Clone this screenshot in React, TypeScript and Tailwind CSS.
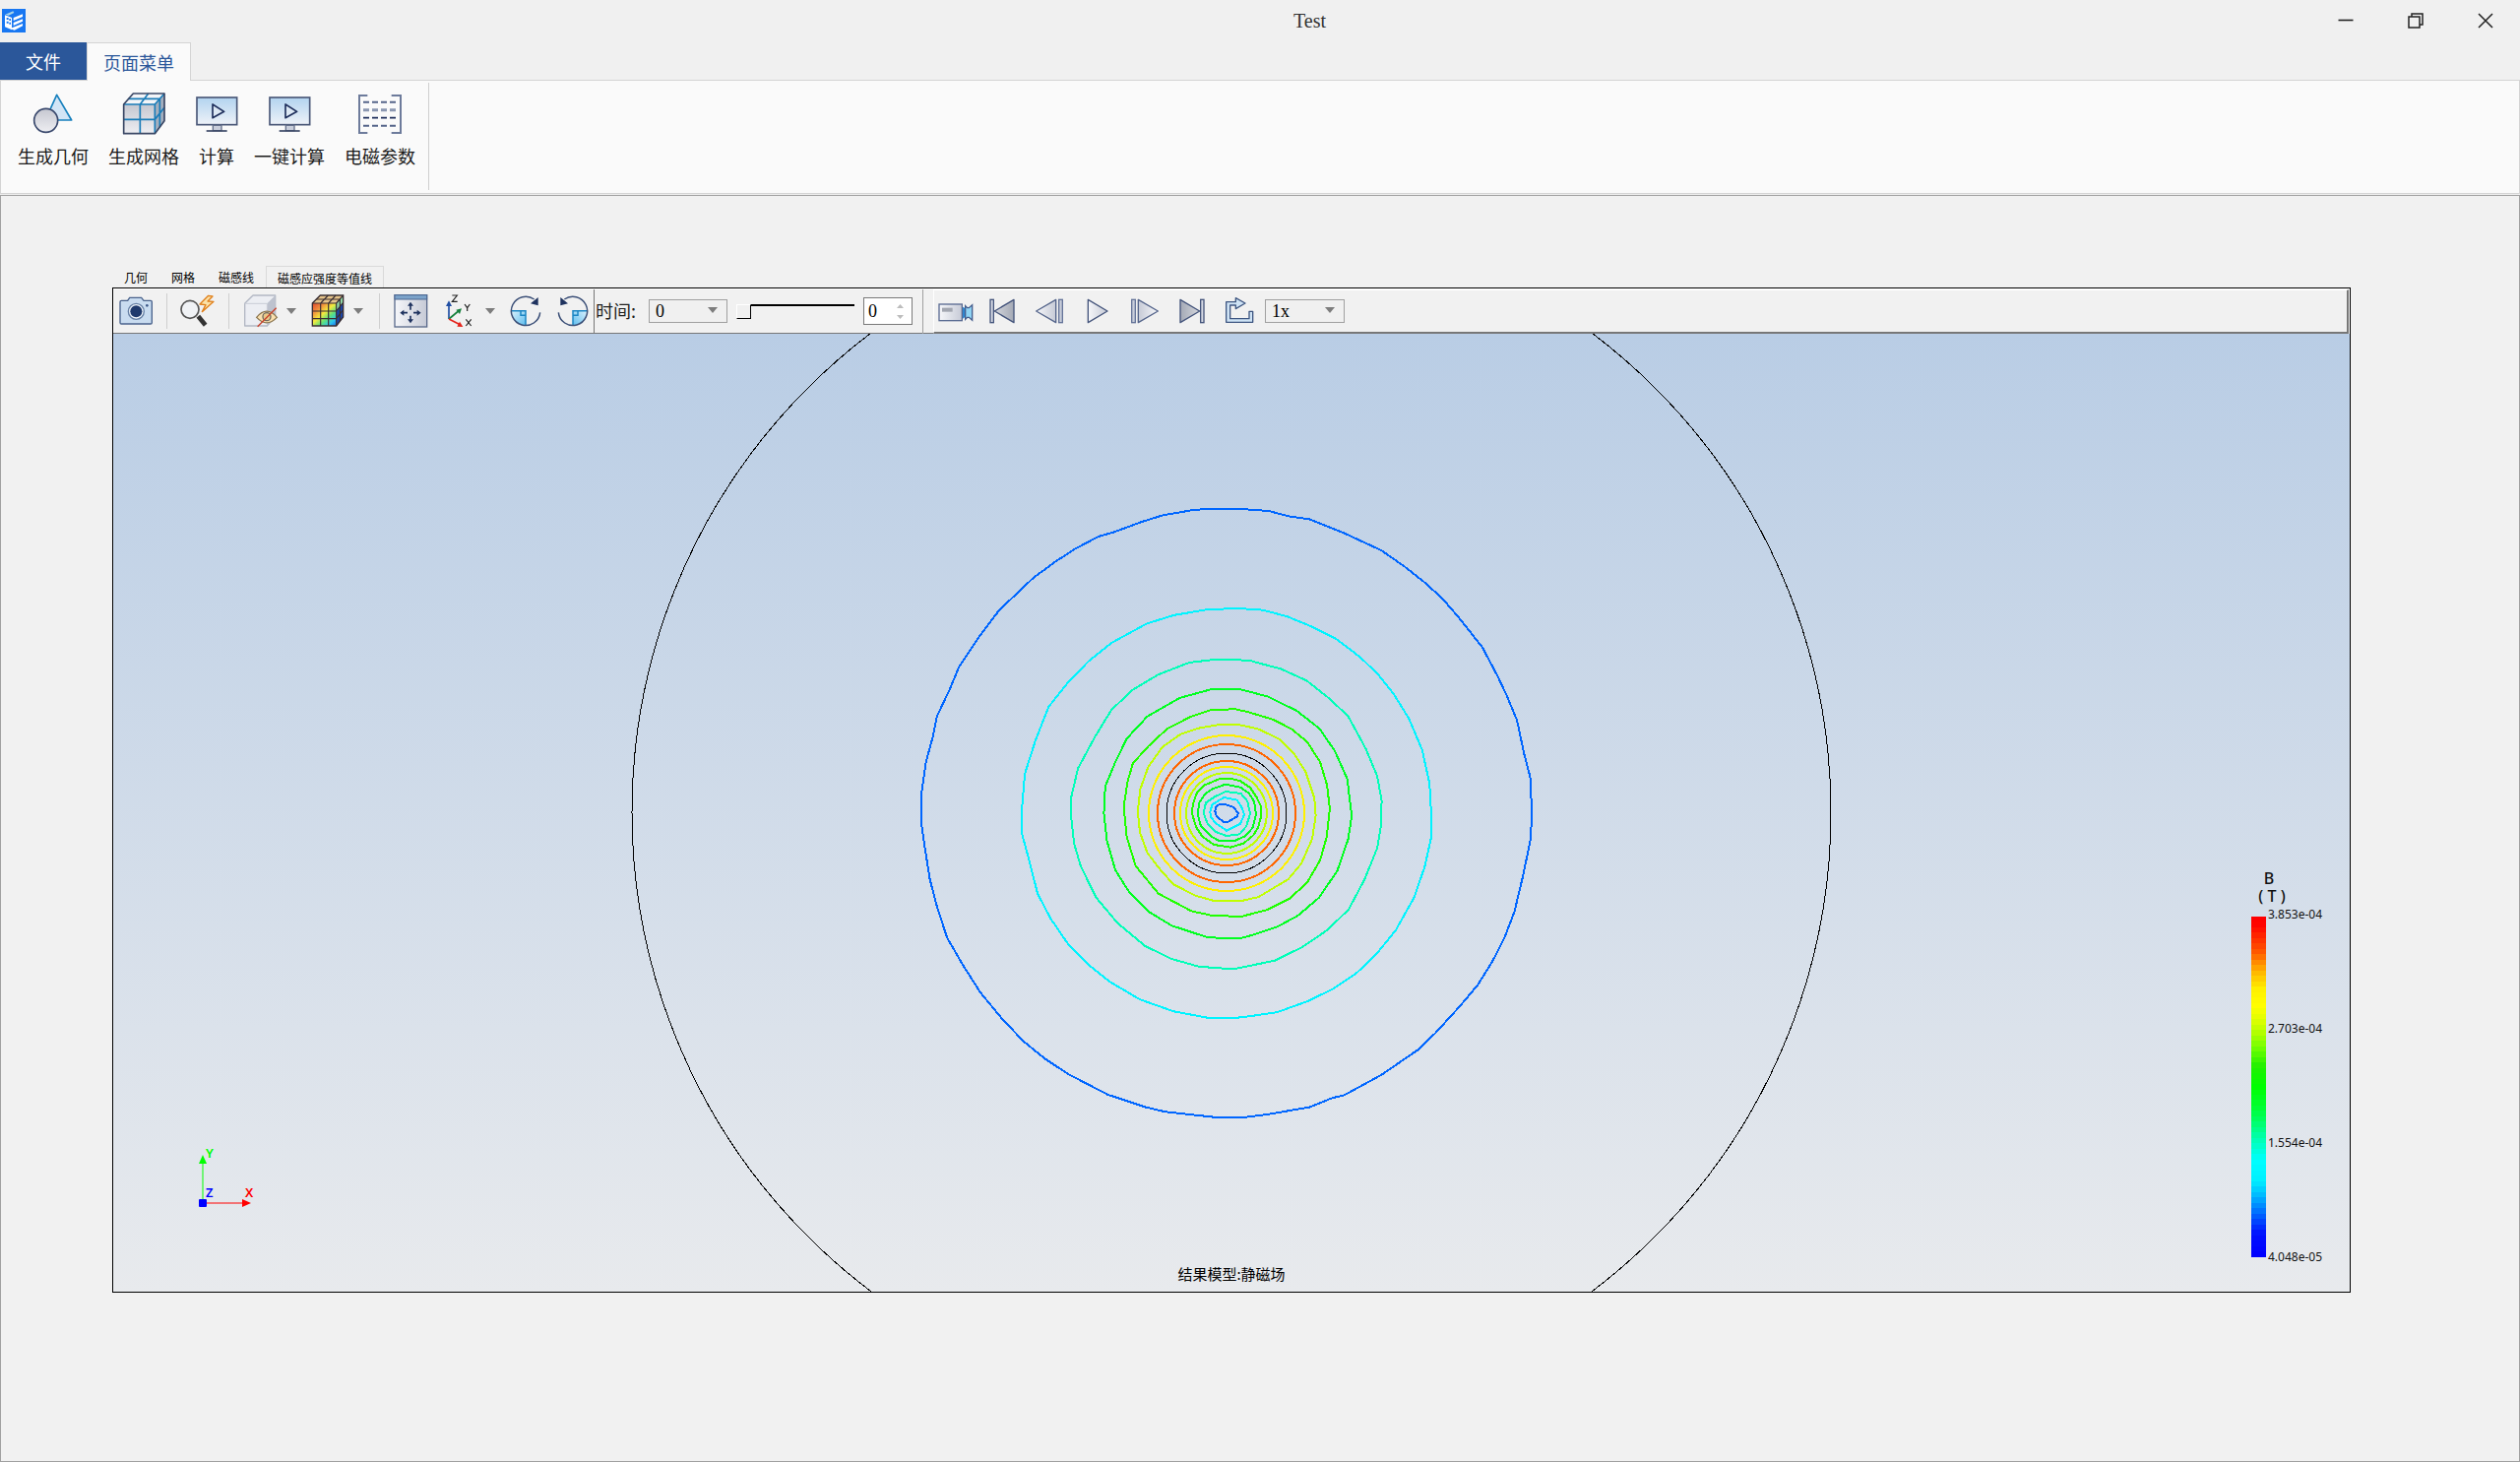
import React from "react";

const CJK = "font-['Noto_Sans_CJK_SC',sans-serif]";
const NUMERIC = "font-['Liberation_Serif','Noto_Sans_CJK_SC',serif]";

/* ---------- icons ---------- */

function Defs() {
  return (
    <svg className="absolute h-0 w-0" aria-hidden="true">
      <defs>
        <linearGradient id="blueScreen" x1="0" y1="0" x2="0" y2="1">
          <stop offset="0" stopColor="#b2d3ef" />
          <stop offset="1" stopColor="#eef2f8" />
        </linearGradient>
        <linearGradient id="greyDown" x1="0" y1="0" x2="0" y2="1">
          <stop offset="0" stopColor="#c5c7d0" />
          <stop offset="1" stopColor="#eeeef2" />
        </linearGradient>
        <linearGradient id="greyRight" x1="0" y1="0" x2="1" y2="0">
          <stop offset="0" stopColor="#f6f7fa" />
          <stop offset="1" stopColor="#c6cad6" />
        </linearGradient>
        <linearGradient id="greyDark" x1="0" y1="0" x2="1" y2="0">
          <stop offset="0" stopColor="#d5d7dd" />
          <stop offset="1" stopColor="#a4a9b5" />
        </linearGradient>
        <linearGradient id="skyFill" x1="0" y1="0" x2="1" y2="1">
          <stop offset="0" stopColor="#d9f0fc" />
          <stop offset="1" stopColor="#5dbdee" />
        </linearGradient>
        <linearGradient id="rainbow" x1="0.1" y1="0.1" x2="0.9" y2="1">
          <stop offset="0" stopColor="#d93a2b" />
          <stop offset="0.25" stopColor="#f08a3c" />
          <stop offset="0.45" stopColor="#f3ea3e" />
          <stop offset="0.62" stopColor="#5fe07c" />
          <stop offset="0.78" stopColor="#2bc4f0" />
          <stop offset="1" stopColor="#1540e0" />
        </linearGradient>
      </defs>
    </svg>
  );
}

function AppLogo() {
  return (
    <svg viewBox="0 0 72 72" className="h-6 w-6" aria-hidden="true">
      <rect width="72" height="72" fill="#1877f2" />
      <path d="M10 17 L34 7 L37 12 L20 20 Z" fill="#a9d4e6" />
      <path d="M9 19 L30 27 V64 L9 55 Z" fill="#fff" />
      <path d="M14 27h6v6h-6zM22 30h5v6h-5zM14 38h6v6h-6zM22 41h5v6h-5z" fill="#1877f2" />
      <path d="M35 27 L63 16 V24 L35 36 Z M35 42 L63 31 V38 L35 51 Z M30 58 L63 45 V52 L38 65 L30 62Z" fill="#fff" />
    </svg>
  );
}

const large = "-mx-1 h-11 w-11";

function GeometryIcon() {
  return (
    <svg viewBox="98 284 132 132" className={large} aria-hidden="true">
      <path d="M175 291 L220 368 H140 Z" fill="#d3e5f6" stroke="#1780bd" strokeWidth="5" strokeLinejoin="round" />
      <circle cx="142" cy="369" r="36" fill="url(#greyDown)" stroke="#3b4a6e" strokeWidth="5" />
    </svg>
  );
}

function MeshIcon() {
  return (
    <svg viewBox="372 284 132 132" className={large} aria-hidden="true">
      <path d="M377 320 L406 287 H501 V370 L472 409 H377 Z" fill="#f4f5f8" />
      <path d="M377 320 H472 V409 H377 Z" fill="url(#greyDown)" />
      <path d="M472 320 L501 287 V370 L472 409 Z" fill="#a5afbe" />
      <path d="M427 409 V320 L452 287 M377 366 H472 L501 330 M391 303 H487 V390 M472 409 V320 L501 287 M377 320 H472" fill="none" stroke="#1a7cb8" strokeWidth="5" />
      <path d="M377 320 L406 287 H501 V370 L472 409 H377 Z" fill="none" stroke="#3a4765" strokeWidth="5" strokeLinejoin="round" />
    </svg>
  );
}

function MonitorIcon() {
  return (
    <svg viewBox="594 284 132 132" className={large} aria-hidden="true">
      <rect x="600" y="299" width="122" height="83" fill="url(#blueScreen)" stroke="#4a5878" strokeWidth="5" />
      <path d="M648 320 V361 L683 342 Z" fill="#dce8f4" stroke="#1f2f5c" strokeWidth="5" strokeLinejoin="round" />
      <rect x="649" y="384" width="26" height="16" fill="#c9cedb" stroke="#66718c" strokeWidth="4" />
      <path d="M629 401 H692" stroke="#3a4765" strokeWidth="5" />
    </svg>
  );
}

function MatrixIcon() {
  return (
    <svg viewBox="1093 282 132 132" className={large} aria-hidden="true">
      <path d="M1121 291 H1096 V405 H1121 M1194 291 H1222 V405 H1194" fill="none" stroke="#6d7b9b" strokeWidth="6" />
      <path d="M1108 311 H1212 M1108 383 H1212" stroke="#56658a" strokeWidth="6" strokeDasharray="18 9" />
      <path d="M1108 335 H1212" stroke="#8b97b1" strokeWidth="9" strokeDasharray="18 9" />
      <path d="M1108 359 H1212" stroke="#1f2f5c" strokeWidth="5" strokeDasharray="18 9" />
    </svg>
  );
}

const tool = "h-9 w-9";

function CameraIcon() {
  return (
    <svg viewBox="60 116 108 108" className={tool} aria-hidden="true">
      <path d="M66 142 Q66 138 70 138 H89 L95 129 H131 L138 138 H159 Q163 138 163 142 V205 Q163 209 159 209 H70 Q66 209 66 205 Z" fill="#c9dcf0" stroke="#49628c" strokeWidth="4" />
      <circle cx="115" cy="171" r="24" fill="#eef4fa" stroke="#6680a5" strokeWidth="4" />
      <circle cx="115" cy="171" r="18" fill="#1f3a6d" />
      <circle cx="148" cy="153" r="4" fill="#3c5888" />
    </svg>
  );
}

function SearchFlashIcon() {
  return (
    <svg viewBox="248 114 108 108" className={tool} aria-hidden="true">
      <path d="M306 184 L328 211" stroke="#333" strokeWidth="14" />
      <circle cx="281" cy="163" r="27" fill="#f0f2f5" stroke="#555" strokeWidth="5" />
      <path d="M337 121 L311 147 L329 149 L318 170 L353 139 L335 138 L350 123 Z" fill="#fbe2a8" stroke="#e0801c" strokeWidth="4" strokeLinejoin="round" />
    </svg>
  );
}

function HideCubeIcon() {
  return (
    <svg viewBox="440 116 108 108" className={tool} aria-hidden="true">
      <path d="M445 147 L470 122 H538 V187 L513 215 H445 Z" fill="#eceef3" stroke="#b3b8c4" strokeWidth="4" strokeLinejoin="round" />
      <path d="M513 147 L538 122 V187 L513 215 Z" fill="#bdc2ce" />
      <path d="M445 147 H513 V180" fill="none" stroke="#c9cdd6" strokeWidth="3" />
      <path d="M481 189 Q512 152 543 189 Q512 222 481 189 Z" fill="#f9dfae" stroke="#8b7650" strokeWidth="4" />
      <circle cx="512" cy="187" r="12" fill="#e9c988" stroke="#6d6a62" strokeWidth="4" />
      <path d="M484 217 L541 160" stroke="#c8412b" strokeWidth="4" />
    </svg>
  );
}

function ColorCubeIcon() {
  return (
    <svg viewBox="645 116 108 108" className={tool} aria-hidden="true">
      <path d="M652 146 L676 122 H746 V188 L725 215 H652 Z" fill="url(#rainbow)" />
      <path d="M652 146 L676 122 H746 L725 146 Z" fill="#e6c48b" />
      <path d="M725 146 L746 122 V188 L725 215 Z" fill="#1c46a8" />
      <path d="M725 146 L746 122 V142 L725 168 Z" fill="#8fd6a4" />
      <path d="M652 146 H725 V215 M652 170 H725 L746 144 M652 193 H725 L746 166 M677 215 V146 L700 122 M701 215 V146 L723 122 M725 146 L746 122 M664 134 H736 V200" fill="none" stroke="#3a2f33" strokeWidth="3.5" />
      <path d="M652 146 L676 122 H746 V188 L725 215 H652 Z" fill="none" stroke="#3a2f33" strokeWidth="4" />
    </svg>
  );
}

function FitIcon() {
  return (
    <svg viewBox="896 114 108 108" className={tool} aria-hidden="true">
      <rect x="902" y="119" width="98" height="97" fill="url(#greyRight)" stroke="#5b6b8c" strokeWidth="4" />
      <rect x="902" y="119" width="98" height="13" fill="#7ca3ca" stroke="#4b6691" strokeWidth="3" />
      <path d="M950 164 V146 M950 182 V199 M941 173 H924 M959 173 H976" stroke="#1f335f" strokeWidth="5" />
      <path d="M950 140 L959 152 H941 Z M950 205 L959 193 H941 Z M918 173 L930 164 V182 Z M982 173 L970 164 V182 Z" fill="#1f335f" />
    </svg>
  );
}

function AxesIcon() {
  return (
    <svg viewBox="1048 114 108 108" className={tool} aria-hidden="true">
      <path d="M1069 192 V148" stroke="#1f4ea3" strokeWidth="5" />
      <path d="M1069 136 L1078 153 H1060 Z" fill="#1f4ea3" />
      <path d="M1069 192 L1098 168" stroke="#17803d" strokeWidth="5" />
      <path d="M1108 160 L1102 177 L1091 164 Z" fill="#17803d" />
      <path d="M1069 192 L1100 208" stroke="#e5231b" strokeWidth="5" />
      <path d="M1112 216 L1094 215 L1102 200 Z" fill="#e5231b" />
      <path d="M1079 120 H1094 L1079 139 H1095" fill="none" stroke="#222" strokeWidth="3.5" />
      <path d="M1117 147 L1125 158 L1133 147 M1125 158 V168" fill="none" stroke="#222" strokeWidth="3.5" />
      <path d="M1121 193 L1137 213 M1137 193 L1121 213" stroke="#222" strokeWidth="3.5" />
    </svg>
  );
}

function RotateIcon({ mirrored = false }: { mirrored?: boolean }) {
  return (
    <svg viewBox="-12 54 108 108" className={mirrored ? "h-9 w-9 -scale-x-100" : tool} aria-hidden="true">
      <path d="M42 107 H0 Q2 148 42 152 Z" fill="url(#skyFill)" />
      <path d="M0 107 H42 V151 M27 107 V121 H42" fill="none" stroke="#1c86c4" strokeWidth="4.5" />
      <path d="M86 112 A44 44 0 1 1 68 72" fill="none" stroke="#3c5078" strokeWidth="4.5" />
      <path d="M80 66 V91 L57 85 Z" fill="#1f335f" />
    </svg>
  );
}

function RecordIcon() {
  return (
    <svg viewBox="66 54 108 108" className={tool} aria-hidden="true">
      <rect x="69" y="87" width="70" height="50" fill="url(#greyRight)" stroke="#5a6b92" strokeWidth="4" />
      <rect x="78" y="98" width="32" height="12" fill="#a2a6b0" />
      <path d="M141 95 L148 99 V126 L141 131 Z" fill="#2e86cf" />
      <path d="M149 92 L155 98 H160 L170 89 V136 L160 127 H155 L149 133 Z" fill="#8fd3f3" stroke="#465f8e" strokeWidth="4" />
    </svg>
  );
}

function FirstIcon() {
  return (
    <svg viewBox="210 54 108 108" className={tool} aria-hidden="true">
      <rect x="228" y="73" width="10" height="70" fill="#d7dbe5" stroke="#45557c" strokeWidth="4" />
      <path d="M300 73 V143 L241 108 Z" fill="url(#greyDark)" stroke="#45557c" strokeWidth="4" strokeLinejoin="round" />
    </svg>
  );
}

function PrevIcon() {
  return (
    <svg viewBox="353 54 108 108" className={tool} aria-hidden="true">
      <path d="M427 73 V143 L367 108 Z" fill="url(#greyRight)" stroke="#55658b" strokeWidth="4" strokeLinejoin="round" />
      <rect x="436" y="73" width="11" height="70" fill="#c9cedb" stroke="#66759a" strokeWidth="4" />
    </svg>
  );
}

function PlayIcon() {
  return (
    <svg viewBox="502 54 108 108" className={tool} aria-hidden="true">
      <path d="M527 73 V143 L586 108 Z" fill="url(#greyRight)" stroke="#45557c" strokeWidth="4" strokeLinejoin="round" />
    </svg>
  );
}

function LoopIcon() {
  return (
    <svg viewBox="932 54 108 108" className={tool} aria-hidden="true">
      <path d="M946 80 H975 V68 L1004 84 L975 101 V90 H958 V131 H1016 V109 H1027 V142 H946 Z" fill="#cfe3f5" stroke="#3f5782" strokeWidth="4" strokeLinejoin="round" />
    </svg>
  );
}

function CaretDown() {
  return (
    <svg viewBox="0 0 10 6" className="h-1.5 w-2.5" aria-hidden="true">
      <path d="M0 0 H10 L5 6 Z" fill="#7d7d7d" />
    </svg>
  );
}

/* ---------- ribbon ---------- */

const ribbonActions = [
  { label: "生成几何", icon: <GeometryIcon /> },
  { label: "生成网格", icon: <MeshIcon /> },
  { label: "计算", icon: <MonitorIcon /> },
  { label: "一键计算", icon: <MonitorIcon /> },
  { label: "电磁参数", icon: <MatrixIcon /> },
];

function TitleBar() {
  return (
    <header className="flex h-[43px] items-start">
      <div className="pt-[9px] pl-[2px]">
        <AppLogo />
      </div>
      <h1 className="flex-1 pl-72 text-center font-['Liberation_Serif',serif] text-xl leading-[43px] text-[#333]">Test</h1>
      <div className="flex h-[41px]">
        <button aria-label="最小化" className="flex w-[71px] items-center justify-center">
          <svg viewBox="0 0 16 16" className="h-4 w-4"><path d="M0.5 7.5 H15.5" stroke="#222" strokeWidth="1.6" /></svg>
        </button>
        <button aria-label="还原" className="flex w-[71px] items-center justify-center">
          <svg viewBox="0 0 16 16" className="h-4 w-4" fill="none" stroke="#222" strokeWidth="1.5"><path d="M1 4 H12 V15 H1 Z M4 4 V1 H15 V12 H12" /></svg>
        </button>
        <button aria-label="关闭" className="flex w-[71px] items-center justify-center">
          <svg viewBox="0 0 16 16" className="h-4 w-4"><path d="M1 1 L15 15 M15 1 L1 15" stroke="#222" strokeWidth="1.5" /></svg>
        </button>
      </div>
    </header>
  );
}

function Ribbon() {
  return (
    <>
      <nav className="flex h-[38px] text-lg leading-9">
        <button className="w-[88px] bg-[#2b579a] text-white">文件</button>
        <button className="relative z-10 -mb-px w-[106px] border border-b-0 border-[#d4d4d4] bg-[#fafafa] text-[#2b579a]">页面菜单</button>
      </nav>
      <section className="flex h-[116px] items-start border border-[#d4d4d4] bg-[#fafafa] pt-0.5 pl-[7px]">
        {ribbonActions.map((a) => (
          <button key={a.label} className="mt-2.5 flex flex-col items-center gap-2 px-2.5 text-lg leading-6 text-[#1a1a1a]">
            {a.icon}
            {a.label}
          </button>
        ))}
        <div className="ml-[3px] h-[109px] w-px bg-[#d0d0d0]" />
      </section>
    </>
  );
}

/* ---------- viewer tool bar ---------- */

function Tool({ label, className = "", children }: { label: string; className?: string; children: React.ReactNode }) {
  return (
    <button aria-label={label} title={label} className={`flex h-9 shrink-0 items-center justify-center ${className}`}>
      {children}
    </button>
  );
}

function Divider({ className = "" }: { className?: string }) {
  return <div className={`w-px shrink-0 ${className}`} />;
}

function Combo({ id, label, value, className }: { id: string; label: string; value: string; className: string }) {
  return (
    <div className={`relative flex h-6 shrink-0 items-center ${className}`}>
      <select id={id} aria-label={label} defaultValue={value} className={`h-full w-full appearance-none border border-[#a0a0a0] bg-[#f0f0f0] pl-1.5 text-lg leading-none text-black ${NUMERIC}`}>
        <option>{value}</option>
      </select>
      <span className="pointer-events-none absolute right-2.5 pb-0.5">
        <CaretDown />
      </span>
    </div>
  );
}

function ViewerToolbar() {
  return (
    <div className="flex h-[46px] items-stretch border-t border-r border-white">
      <div className="flex items-center border-b border-[#777]">
        <Tool label="截图" className="ml-[5px] w-9"><CameraIcon /></Tool>
        <Divider className="ml-[13px] h-9 bg-[#cfcfcf]" />
        <Tool label="快速缩放" className="ml-3 w-9"><SearchFlashIcon /></Tool>
        <Divider className="ml-3.5 h-9 bg-[#cfcfcf]" />
        <Tool label="隐藏" className="ml-3.5 w-9"><HideCubeIcon /></Tool>
        <Tool label="隐藏选项" className="w-[26px]"><CaretDown /></Tool>
        <Tool label="着色" className="ml-1.5 w-9"><ColorCubeIcon /></Tool>
        <Tool label="着色选项" className="w-[26px]"><CaretDown /></Tool>
        <Divider className="ml-2 h-9 bg-[#cfcfcf]" />
        <Tool label="适应窗口" className="ml-[13px] w-9"><FitIcon /></Tool>
        <Tool label="视角" className="ml-3.5 w-9"><AxesIcon /></Tool>
        <Tool label="视角选项" className="w-[26px]"><CaretDown /></Tool>
        <Tool label="顺时针旋转" className="ml-[5px] w-9"><RotateIcon /></Tool>
        <Tool label="逆时针旋转" className="ml-3 w-9"><RotateIcon mirrored /></Tool>
      </div>
      <div className="w-[3px] border-b border-[#777]" />
      <Divider className="bg-[#777]" />
      <div className="flex items-center border-b border-[#777] pr-2.5">
        <label htmlFor="time" className={`w-[55px] pb-0.5 pl-px text-lg leading-6 whitespace-nowrap text-[#222] ${CJK}`}>时间:</label>
        <Combo id="time" label="时间" value="0" className="w-20" />
        <input
          type="range"
          aria-label="时间步"
          defaultValue={0}
          className="ml-[9px] h-4 w-[120px] appearance-none bg-transparent [&::-webkit-slider-runnable-track]:h-[15px] [&::-webkit-slider-runnable-track]:border-t-2 [&::-webkit-slider-runnable-track]:border-black [&::-webkit-slider-thumb]:-mt-0.5 [&::-webkit-slider-thumb]:h-[15px] [&::-webkit-slider-thumb]:w-[15px] [&::-webkit-slider-thumb]:appearance-none [&::-webkit-slider-thumb]:border [&::-webkit-slider-thumb]:border-t-white [&::-webkit-slider-thumb]:border-r-black [&::-webkit-slider-thumb]:border-b-black [&::-webkit-slider-thumb]:border-l-white [&::-webkit-slider-thumb]:bg-[#f0f0f0]"
        />
        <div className="ml-[9px] flex h-7 w-[50px] items-center border border-[#7a7a7a] bg-white pr-2">
          <input aria-label="帧" type="text" defaultValue="0" className={`w-full min-w-0 bg-transparent pl-1 text-lg leading-none text-black outline-none ${NUMERIC}`} />
          <svg viewBox="0 0 7 15" className="h-[15px] w-[7px] shrink-0" aria-hidden="true">
            <path d="M0 4 L3.500 0 L7 4 Z M0 11 H7 L3.500 15 Z" fill="#bdbdbd" />
          </svg>
        </div>
      </div>
      <Divider className="bg-[#a0a0a0]" />
      <div className="w-2.5 border-b border-[#777]" />
      <div className="flex flex-1 items-center border-t border-r-2 border-b-2 border-l border-t-white border-r-[#777] border-b-[#777] border-l-white">
        <Tool label="录制" className="w-11"><RecordIcon /></Tool>
        <Tool label="第一帧" className="w-[49px]"><FirstIcon /></Tool>
        <Tool label="上一帧" className="w-12"><PrevIcon /></Tool>
        <Tool label="播放" className="w-[49px]"><PlayIcon /></Tool>
        <Tool label="下一帧" className="w-12"><span className="-scale-x-100"><PrevIcon /></span></Tool>
        <Tool label="最后一帧" className="w-12"><span className="-scale-x-100"><FirstIcon /></span></Tool>
        <Tool label="循环" className="w-12"><LoopIcon /></Tool>
        <Combo id="speed" label="播放速度" value="1x" className="ml-0.5 w-[81px]" />
      </div>
    </div>
  );
}

/* ---------- field plot ---------- */

const outerContours = [
  { color: "#0066ff", points: "80,775 80,735 91,655 107,595 116,548 145,485 166,433 213,360 258,299 335,224 385,186 430,156 483,127 520,116 580,93 630,77 697,65 730,62 805,62 872,67 915,79 963,86 1043,119 1127,159 1180,197 1228,236 1268,274 1304,317 1357,386 1392,454 1413,500 1436,557 1452,635 1466,690 1470,775 1467,835 1450,920 1430,1006 1408,1065 1380,1122 1346,1178 1305,1228 1250,1290 1212,1328 1127,1388 1043,1435 1015,1442 965,1463 870,1480 815,1487 750,1487 635,1474 590,1463 505,1434 415,1386 362,1350 313,1309 265,1257 215,1195 175,1130 139,1066 116,993 100,930 90,865 82,810" },
  { color: "#00f4ff", points: "309,770 316,683 340,605 370,526 413,470 460,420 513,376 593,331 655,311 730,298 800,295 858,299 913,314 965,336 1025,367 1080,410 1120,450 1155,495 1190,553 1220,626 1237,705 1242,800 1240,835 1226,900 1202,972 1160,1049 1115,1106 1070,1150 1018,1186 960,1215 890,1241 830,1250 797,1254 733,1254 655,1239 578,1211 510,1170 465,1133 415,1082 375,1022 345,963 326,885 310,825" },
  { color: "#00ffb8", points: "421,740 437,670 475,597 513,533 561,486 620,450 690,422 755,414 828,417 840,421 897,436 957,464 1010,507 1052,548 1092,624 1118,688 1128,745 1127,800 1118,856 1090,928 1053,1000 1005,1048 948,1088 885,1120 790,1140 712,1134 650,1116 590,1086 527,1032 478,972 443,898 428,845 421,780" },
  { color: "#00ff20", points: "496,775 499,712 522,655 548,600 595,548 668,505 742,484 808,485 870,502 935,535 987,577 1022,630 1050,695 1055,740 1060,780 1052,835 1027,910 985,973 937,1015 890,1041 835,1060 805,1068 733,1066 650,1038 597,1005 555,962 522,908 503,840" },
  { color: "#20ff00", points: "541,760 550,700 562,658 597,618 640,577 695,548 740,533 795,531 825,538 880,555 922,577 958,607 988,655 1004,710 1010,765 1003,830 988,885 958,938 918,975 868,1001 808,1017 740,1014 695,1004 620,963 568,898 548,830" },
  { color: "#c0ff00", points: "573,770 579,718 597,666 629,620 670,590 710,576 760,567 800,567 846,577 897,602 928,634 955,678 975,740 978,780 970,835 945,893 915,930 895,942 848,971 805,981 750,981 705,968 655,942 625,908 595,868 578,820" },
];

const innerContours = [
  { color: "#20ff00", points: "152,255 158,222 168,196 192,172 235,154 270,152 300,160 330,180 350,210 362,235 364,265 355,300 340,325 310,350 270,362 220,354 185,330 165,300" },
  { color: "#00ff20", points: "170,260 175,226 192,200 215,184 255,170 300,179 325,196 342,222 348,260 338,302 315,328 285,341 235,342 210,328 180,298" },
  { color: "#00ffb8", points: "188,258 195,226 222,208 255,192 302,198 322,222 330,260 318,298 298,322 258,327 225,315 200,290" },
  { color: "#00f4ff", points: "208,255 214,232 250,210 290,218 304,240 312,262 300,290 258,311 225,288 210,270" },
  { color: "#0066ff", points: "223,252 226,238 235,232 250,230 280,240 287,250 294,258 290,268 262,285 250,285 228,268" },
];

const rings = [
  { r: 79, color: "#fff000" },
  { r: 70, color: "#ff6600" },
  { r: 53, color: "#ff6600" },
  { r: 47, color: "#fff000" },
  { r: 41, color: "#c0ff00" },
];

function FieldPlot() {
  return (
    <svg viewBox="115 339 2272 973" preserveAspectRatio="xMidYMid slice" className="absolute inset-0 h-full w-full" fill="none" shapeRendering="crispEdges" role="img" aria-label="磁感应强度等值线">
      <circle cx="1251" cy="825" r="609" stroke="#000" />
      <g transform="translate(900 490) scale(0.44643 0.43367)" strokeWidth="2">
        {outerContours.map((c) => (
          <polygon key={c.color} points={c.points} stroke={c.color} vectorEffect="non-scaling-stroke" />
        ))}
      </g>
      {rings.map((c) => (
        <circle key={c.r} cx="1246" cy="826" r={c.r} stroke={c.color} strokeWidth="2" />
      ))}
      <circle cx="1246" cy="826" r="61" stroke="#000" />
      <g transform="translate(1160 740) scale(0.33333)" strokeWidth="2">
        {innerContours.map((c) => (
          <polygon key={c.color} points={c.points} stroke={c.color} vectorEffect="non-scaling-stroke" />
        ))}
      </g>
    </svg>
  );
}

function AxisTriad() {
  return (
    <svg viewBox="0 0 70 70" className="absolute bottom-[83px] left-[85px] h-[70px] w-[70px] font-['Noto_Sans',sans-serif] text-[13px] font-semibold" aria-label="坐标轴">
      <path d="M6 62 V22" stroke="#00ff00" />
      <path d="M6 14 L10 23 H2 Z" fill="#00ff00" />
      <path d="M6 63 H48" stroke="#ff0000" />
      <path d="M55 63 L46 59 V67 Z" fill="#ff0000" />
      <rect x="2" y="59" width="8" height="8" rx="1" fill="#0000ff" />
      <text x="9" y="17" fill="#00ff00">Y</text>
      <text x="9" y="57" fill="#0000ff">Z</text>
      <text x="49" y="57" fill="#ff0000">X</text>
    </svg>
  );
}

/* position along the bar (0 = top) and its red, green, blue value */
const stops: [number, number, number, number][] = [
  [0, 255, 0, 0], [0.02, 255, 4, 0], [0.1, 255, 90, 0], [0.13, 255, 140, 0], [0.165, 255, 192, 0], [0.21, 255, 240, 0],
  [0.26, 255, 255, 0], [0.3, 224, 255, 0], [0.34, 176, 255, 0], [0.385, 112, 255, 0], [0.44, 32, 240, 0], [0.5, 0, 255, 0],
  [0.56, 0, 255, 48], [0.6, 0, 255, 96], [0.655, 0, 255, 176], [0.72, 0, 255, 255], [0.78, 0, 240, 255], [0.82, 0, 192, 255],
  [0.855, 0, 140, 255], [0.895, 0, 80, 255], [0.94, 0, 16, 255], [1, 0, 0, 255],
];

function colorAt(t: number) {
  const i = Math.max(1, stops.findIndex((s) => s[0] >= t));
  const a = stops[i - 1];
  const b = stops[i];
  const k = (t - a[0]) / (b[0] - a[0]);
  return `rgb(${[1, 2, 3].map((c) => Math.round(a[c] + (b[c] - a[c]) * k)).join(",")})`;
}

const bands = Array.from({ length: 63 }, (_, i) => colorAt(i / 62));
const ticks = ["3.853e-04", "2.703e-04", "1.554e-04", "4.048e-05"];

function Legend() {
  return (
    <div className="absolute right-[22px] bottom-[33px] w-[78px] font-['Noto_Sans',sans-serif] text-[#111]">
      <div className="mb-2.5 w-[42px] text-center text-base leading-[18px] font-medium">
        <div className="pr-2.5 pl-1">B</div>
        <div className="whitespace-nowrap">( T )</div>
      </div>
      <div className="flex h-[350px] gap-0.5">
        <div className="my-0.5 flex w-[15px] flex-col">
          {bands.map((color, i) => (
            <div key={i} className="flex-1" style={{ backgroundColor: color }} />
          ))}
        </div>
        <div className="-mt-2 -mb-1.5 flex flex-col justify-between text-xs leading-4">
          {ticks.map((t) => (
            <span key={t}>{t}</span>
          ))}
        </div>
      </div>
    </div>
  );
}

const resultTabs = ["几何", "网格", "磁感线", "磁感应强度等值线"];

export default function App() {
  return (
    <div className={`flex min-h-screen flex-col bg-[#f0f0f0] ${CJK}`}>
      <Defs />
      <TitleBar />
      <Ribbon />
      <main className="mt-px flex flex-1 flex-col border border-[#a0a0a0] bg-[#f1f1f1] pt-[71px] pr-[171px] pb-[171px] pl-[113px]">
        <div role="tablist" className="flex h-[22px] text-xs leading-6">
          {resultTabs.map((t, i) => (
            <button
              key={t}
              role="tab"
              aria-selected={i === 3}
              className={i === 3 ? "border border-b-0 border-[#d9d9d9] px-[11px] text-black" : "px-3 text-black"}
            >
              {t}
            </button>
          ))}
        </div>
        <div className="flex flex-1 flex-col border border-black">
          <ViewerToolbar />
          <div className="relative flex-1 overflow-hidden bg-linear-to-b from-[#b9cde5] to-[#e8eaed]">
            <FieldPlot />
            <AxisTriad />
            <Legend />
            <p className="absolute inset-x-0 bottom-2 text-center text-[15px] leading-5 text-black">结果模型:静磁场</p>
          </div>
        </div>
      </main>
    </div>
  );
}
